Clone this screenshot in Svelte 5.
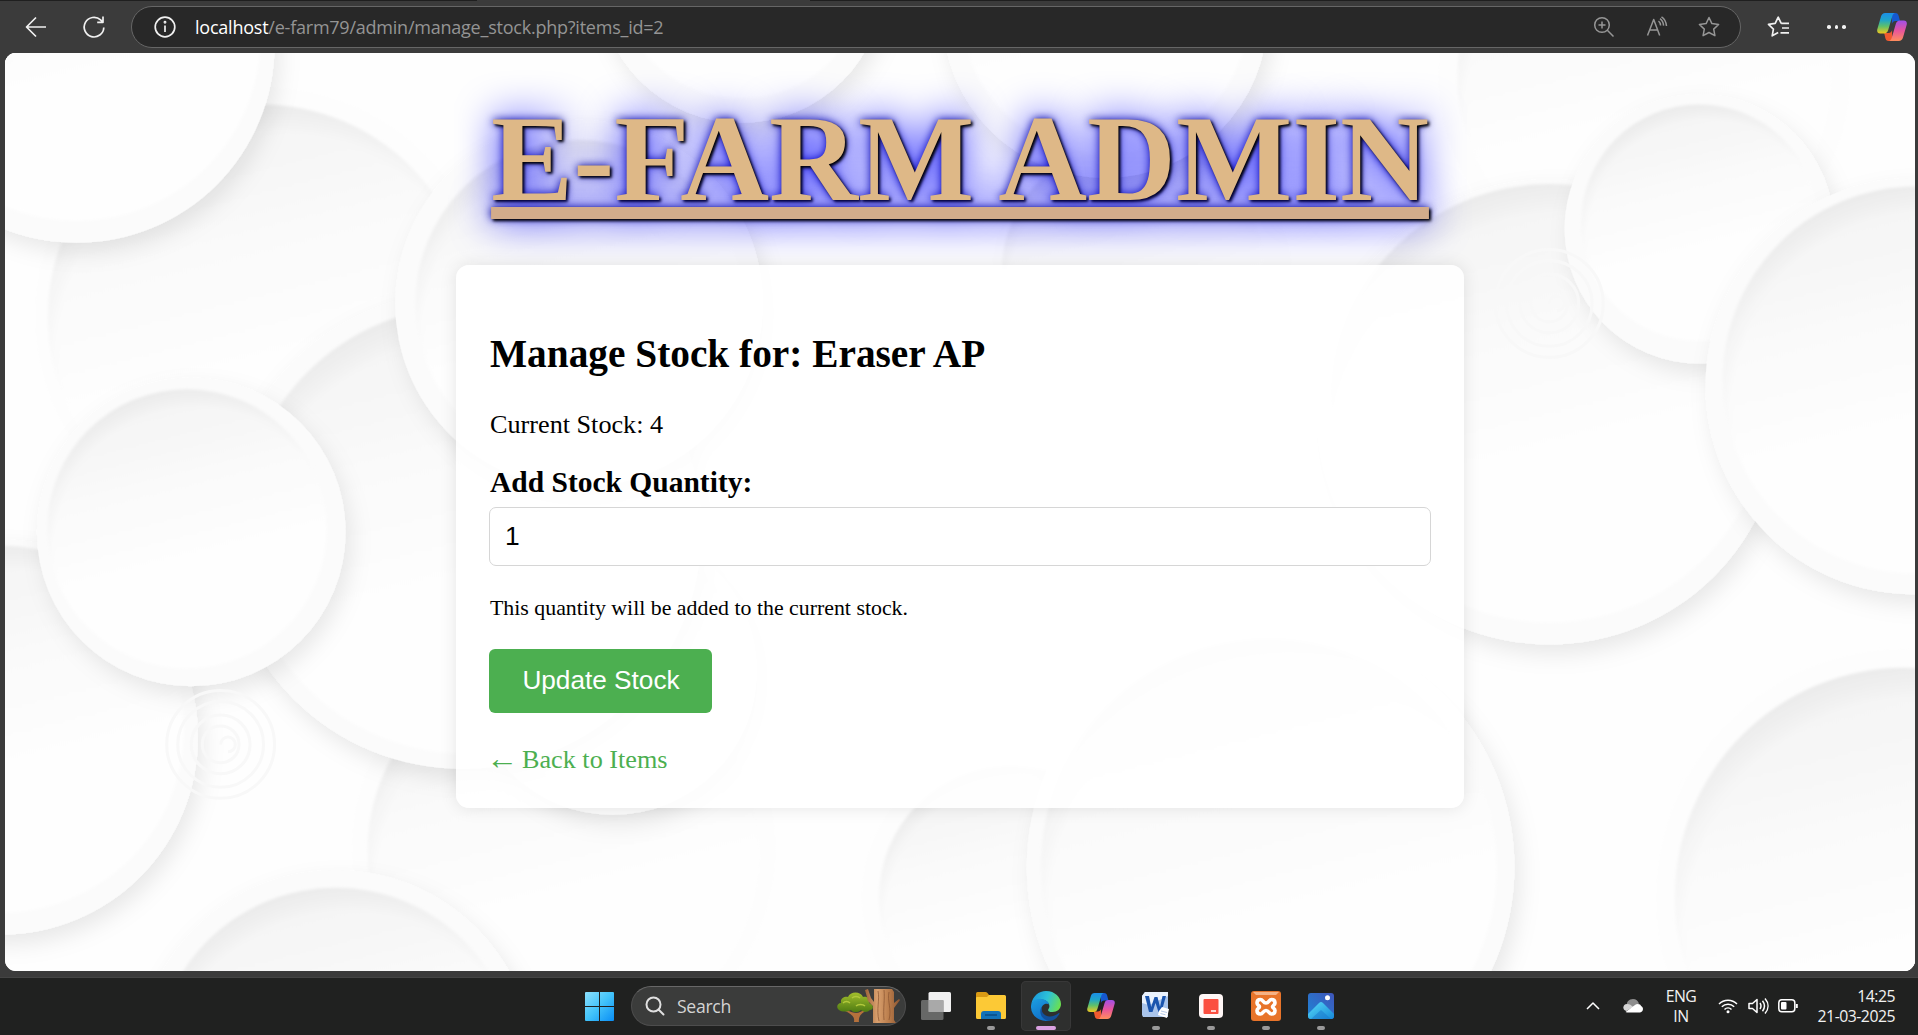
<script>
  // Relief discs of the page backdrop: rim centre and radius, then the inner face.
  // A flat disc has no raised rim, only the recessed face.
  const discs = [
    { x: 2684, y: 60, r: 335, ix: 2684, iy: 60, ir: 305, flat: true },
    { x: 1864, y: 390, r: 245, ix: 1850, iy: 380, ir: 215, flat: true },
    { x: 430, y: 450, r: 372, ix: 425, iy: 452, ir: 347, flat: true },
    { x: 1210, y: -98, r: 233, ix: 1210, iy: -110, ir: 205 },
    { x: 1804, y: -40, r: 265, ix: 1804, iy: -50, ir: 235 },
    { x: 125, y: 8, r: 323, ix: 125, iy: -5, ir: 300 },
    { x: 920, y: 1320, r: 345, ix: 920, iy: 1325, ir: 320, flat: true },
    { x: 1000, y: 1030, r: 235, ix: 1000, iy: 1020, ir: 210 },
    { x: 755, y: 800, r: 390, ix: 760, iy: 800, ir: 365 },
    { x: 945, y: 430, r: 300, ix: 945, iy: 430, ir: 267 },
    { x: 0, y: 1138, r: 323, ix: 0, iy: 1125, ir: 300 },
    { x: 312, y: 803, r: 252, ix: 305, iy: 798, ir: 228 },
    { x: 548, y: 1680, r: 325, ix: 548, iy: 1680, ir: 296 },
    { x: 1650, y: 1400, r: 243, ix: 1650, iy: 1400, ir: 215, flat: true },
    { x: 2074, y: 1350, r: 398, ix: 2071, iy: 1350, ir: 372 },
    { x: 2529, y: 607, r: 380, ix: 2529, iy: 593, ir: 358 },
    { x: 2774, y: 308, r: 220, ix: 2774, iy: 298, ir: 193 },
    { x: 3124, y: 565, r: 340, ix: 3128, iy: 555, ir: 316 },
    { x: 3109, y: 1400, r: 405, ix: 3109, iy: 1400, ir: 375, flat: true }
  ];
  const spirals = [{ x: 2529, y: 430 }, { x: 360, y: 1150 }];
  let quantity = $state('1');
</script>

{#snippet copilot()}
  <svg viewBox="0 0 30 28">
    <defs>
      <linearGradient id="cpA" x1="0" y1="0" x2="0" y2="1">
        <stop offset="0" stop-color="#1b8fe8" /><stop offset=".35" stop-color="#1fa5c9" />
        <stop offset=".65" stop-color="#5fc06a" /><stop offset="1" stop-color="#f2c81e" />
      </linearGradient>
      <linearGradient id="cpB" x1="0" y1="0" x2="0" y2="1">
        <stop offset="0" stop-color="#a14fe8" /><stop offset=".5" stop-color="#e8559c" />
        <stop offset="1" stop-color="#ff8d5c" />
      </linearGradient>
    </defs>
    <path d="M15 0h3.500c1.800 0 2.700 1.100 3.200 2.900L23 8h-4.500c-2 0-3 1-3.600 3z" fill="#1558cf" />
    <path d="M15 28h-3.500c-1.800 0-2.700-1.100-3.200-2.900L7.200 20h4.300c2 0 3-1 3.600-3z" fill="#f0592f" />
    <path d="M8.200 0H18c-1.600.5-2.300 1.700-2.800 3.400l-4 13.600c-.7 2.300-1.900 3.500-4 3.500H3.200C.8 20.500-.3 18.800.3 16.300L4 3.500C4.700 1.200 6 0 8.200 0z" fill="url(#cpA)" />
    <path d="M21.800 28H12c1.600-.5 2.300-1.700 2.800-3.400l4-13.600c.7-2.300 1.900-3.500 4-3.500h4c2.400 0 3.500 1.700 2.900 4.200L26 24.500c-.7 2.300-2 3.500-4.200 3.500z" fill="url(#cpB)" />
  </svg>
{/snippet}

<div class="screen">
  <div class="tabs-edge"><span></span></div>
  <header class="toolbar">
    <button class="nav back" aria-label="Back">
      <svg width="22" height="22" viewBox="0 0 22 22"><path d="M21 11H1.500M11 1.500L1.500 11 11 20.500" /></svg>
    </button>
    <button class="nav reload" aria-label="Refresh">
      <svg width="24" height="24" viewBox="0 0 24 24"><path d="M21.800 12.500a9.800 9.800 0 1 1-3.200-7.600l2.200 2.200M21 1.500v5.800h-5.800" /></svg>
    </button>
    <div class="address">
      <svg class="info" width="22" height="22" viewBox="0 0 22 22"><circle cx="11" cy="11" r="9.800" /><path d="M11 9.500v6.500" /><circle cx="11" cy="6.300" r=".6" /></svg>
      <span class="url"><b>localhost</b>/e-farm79/admin/manage_stock.php?items_id=2</span>
      <div class="tools">
        <svg viewBox="0 0 22 22"><circle cx="9" cy="9" r="7.300" /><path d="M14.300 14.300L20.500 20.500M9 5.500v7M5.500 9h7" /></svg>
        <svg viewBox="0 0 22 22"><path d="M1.500 19.500L7.700 3.500l6 16M3.600 14h8.100M12.500 5c1.300 1 2 2.500 2.100 4.500M14 2.600c2.200 1.600 3.400 3.900 3.600 7M15.500.8c3 2 4.700 5 5 9.200" /></svg>
        <svg viewBox="0 0 22 22"><path d="M11 1.500l2.900 6.100 6.700.9-4.900 4.600 1.200 6.600-5.900-3.200-5.900 3.200 1.200-6.600-4.900-4.600 6.700-.9z" /></svg>
      </div>
    </div>
    <svg class="favs" width="23" height="22" viewBox="0 0 23 22"><path d="M14.200 7.400l-3-6.200-3 6.200-6.700 1 4.900 4.700-1.200 6.700 6-3.200M14.200 7.400H22M15 12h7M13.500 16.800H22" /></svg>
    <div class="dots"><i></i><i></i><i></i></div>
    <div class="copilot">{@render copilot()}</div>
  </header>

  <main class="page">
    <svg class="backdrop" viewBox="8 21 3118 1499" preserveAspectRatio="none" aria-hidden="true">
      <defs>
        <linearGradient id="face" x1=".35" y1="0" x2=".6" y2="1">
          <stop offset="0" stop-color="#f3f3f3" /><stop offset=".35" stop-color="#fafafa" />
          <stop offset=".62" stop-color="#fefefe" /><stop offset="1" stop-color="#fefefe" />
        </linearGradient>
        <radialGradient id="lip" cx=".53" cy=".57" r=".57">
          <stop offset=".88" stop-color="#000" stop-opacity="0" /><stop offset="1" stop-color="#000" stop-opacity=".035" />
        </radialGradient>
        <filter id="cast" x="-20%" y="-20%" width="140%" height="140%">
          <feDropShadow dx="9" dy="16" stdDeviation="17" flood-color="#000" flood-opacity=".085" />
        </filter>
        <filter id="soft"><feGaussianBlur stdDeviation="3" /></filter>
      </defs>
      <rect x="8" y="21" width="3118" height="1499" fill="#fefefe" />
      {#each discs as d}
        {#if !d.flat}
          <circle cx={d.x} cy={d.y} r={d.r} fill="#fbfbfb" filter="url(#cast)" />
        {:else}
          <circle cx={d.x} cy={d.y} r={d.r} fill="#fdfdfd" filter="url(#soft)" />
        {/if}
        <g filter="url(#soft)">
          <circle cx={d.ix} cy={d.iy} r={d.ir} fill="url(#face)" />
          <circle cx={d.ix} cy={d.iy} r={d.ir} fill="url(#lip)" />
        </g>
      {/each}
      {#each spirals as s}
        <g fill="none" stroke="#f8f8f8" stroke-width="5">
          <circle cx={s.x} cy={s.y} r="88" /><circle cx={s.x} cy={s.y} r="70" />
          <circle cx={s.x} cy={s.y} r="48" /><circle cx={s.x} cy={s.y} r="30" />
          <path d="M{s.x} {s.y}a12 12 0 1 1 12 12" />
        </g>
      {/each}
    </svg>
    <h1>E-FARM ADMIN</h1>
    <section class="card">
      <h2>Manage Stock for: Eraser AP</h2>
      <p class="current">Current Stock: 4</p>
      <label for="qty">Add Stock Quantity:</label>
      <input id="qty" type="text" bind:value={quantity} />
      <small>This quantity will be added to the current stock.</small>
      <button class="update">Update Stock</button>
      <a href="#items"><span class="arrow">←</span><span>Back to Items</span></a>
    </section>
  </main>

  <footer class="taskbar">
    <svg class="start" width="29" height="29" viewBox="0 0 29 29">
      <defs><linearGradient id="win" x1="0" y1="0" x2="1" y2="1"><stop offset="0" stop-color="#8be0fd" /><stop offset=".5" stop-color="#42c3fa" /><stop offset="1" stop-color="#0a8ef5" /></linearGradient></defs>
      <path fill="url(#win)" d="M1 0h13v14H0V1q0-1 1-1zM15 0h13q1 0 1 1v13H15zM0 15h14v14H1q-1 0-1-1zM15 15h14v13q0 1-1 1H15z" />
    </svg>
    <div class="search">
      <svg class="lens" width="20" height="20" viewBox="0 0 20 20"><circle cx="8.500" cy="8.500" r="7" /><path d="M13.500 13.500l5 5" /></svg>
      <span>Search</span>
      <svg class="tree" width="64" height="34" viewBox="0 0 64 34">
        <defs>
          <linearGradient id="bark"><stop offset="0" stop-color="#9c6238" /><stop offset=".35" stop-color="#d9a06e" /><stop offset=".7" stop-color="#b87b4a" /><stop offset="1" stop-color="#8a5430" /></linearGradient>
          <linearGradient id="leaf" x1="0" y1="0" x2="0" y2="1"><stop offset="0" stop-color="#a3bf2c" /><stop offset="1" stop-color="#4d7a12" /></linearGradient>
        </defs>
        <path d="M17 33c1-6-3-8-9-11l1-1c5 2 8 3 10 3 3 0 6-2 10-4l1 1c-5 3-9 6-8 12z" fill="#b5713c" />
        <path d="M2 21c-3-2-2-7 2-7-1-5 4-7 7-6 2-6 13-6 15 0 6-1 8 4 6 6 5 1 5 7 1 7-3 3-7 2-9 0-3 3-8 3-10 0-4 2-9 2-12 0z" fill="url(#leaf)" />
        <path d="M6 14c2-2 5-2 7 0M15 9c2-2 6-2 8 0M19 17c2-2 7-2 9 0" stroke="#b3c93c" stroke-width="1.500" fill="none" />
        <path d="M28 1l3-1 3 9 3 4v-13h18l2 3v11l5-4 1 1-6 8v12l2 3H36V17l-5-5z" fill="url(#bark)" />
        <path d="M41 2c2 9-2 18 1 30M47 1c1 9-1 18 0 30M52 3c-2 9 3 17 0 28" stroke="#87522f" stroke-width=".7" fill="none" />
      </svg>
    </div>
    <div class="apps">
      <div class="app">
        <svg width="30" height="28" viewBox="0 0 30 28"><rect x="7.500" y="0" width="22.500" height="20" rx="1.500" fill="#f1f1f1" /><rect x="0" y="8" width="22.500" height="20" rx="1.500" fill="#777" fill-opacity=".82" /><path d="M7.500 8h15v12h-15z" fill="#a9a9a9" /></svg>
      </div>
      <div class="app open">
        <svg width="30" height="27" viewBox="0 0 30 27"><path d="M0 1.500Q0 0 1.500 0h8q1 0 2 1L13 3v5H0z" fill="#d99a14" /><path d="M0 6q0-1 1-1h10l2-2h15.500Q30 3 30 4.500V25.500Q30 27 28.500 27h-27Q0 27 0 25.500z" fill="#fcc936" /><path d="M5 27v-5q0-3 3-3h14q3 0 3 3v5z" fill="#1272b8" /><path d="M9 23h12" stroke="#0a4c84" stroke-width="1.500" /></svg>
      </div>
      <div class="app active">
        <svg width="30" height="30" viewBox="0 0 30 30">
          <defs>
            <linearGradient id="edA" x1="0" y1=".3" x2="1" y2=".6"><stop offset="0" stop-color="#1a98db" /><stop offset=".5" stop-color="#2dc2d8" /><stop offset="1" stop-color="#6be04f" /></linearGradient>
            <linearGradient id="edB" x1="0" y1="0" x2=".5" y2="1"><stop offset="0" stop-color="#1c9fe0" /><stop offset="1" stop-color="#1070c9" /></linearGradient>
          </defs>
          <path d="M.4 12.500C1.800 5.400 7.600 0 15 0c9 0 15 6.500 15 13 0 5-4 8-8.500 8-3.500 0-5-1.300-4.300-2.600.9-1.200 1.200-2 1.200-3.400 0-3.500-3.600-6.500-8.100-6.500-4.300 0-7.900 1.500-9.900 4z" fill="url(#edA)" />
          <path d="M.4 12.500C2 9 6 7.500 10 7.900c4 .3 7.300 2.600 8.200 5.600-2.600-1.900-7.500-.2-7.700 4.500C10.300 23.500 14 28.500 20 29.100 9.500 32.500-.5 25 0 15z" fill="url(#edB)" />
          <path d="M11 15.500c-1.500 5 2 9.800 7.500 10 3.500.1 6.500-1.200 9-3.200.8-.6 1.300.1.900.8C26 27.200 22.500 30 18 29.700 10.500 29.300 7 20.500 11 15.500z" fill="#124f99" />
        </svg>
      </div>
      <div class="app cp">{@render copilot()}</div>
      <div class="app open up">
        <svg width="28" height="28" viewBox="0 0 28 28"><path d="M4 1h23v25H2L1 24V5z" fill="#a9c4ea" /><path d="M4 1h23v4L8 14 1 12V5z" fill="#eaf2fc" /><path d="M4 5h4l2.200 11L13.500 6h3l2.500 10L21.500 5h3.500l-4.500 16h-3L14.500 12l-3 9H8z" fill="#1a55ae" /><path d="M18 20l3-4 7 2-2 9-9-3z" fill="#fff" /><path d="M20 20l6 1.500M19.500 22.500l5 1.300" stroke="#b4c8e6" stroke-width="1" /></svg>
      </div>
      <div class="app open">
        <svg width="24" height="24" viewBox="0 0 24 24"><rect width="24" height="24" rx="4" fill="#fff7f6" /><rect x="4.500" y="5" width="15" height="15" rx="1" fill="#fb4f40" /><path d="M12 17h5" stroke="#fff" stroke-width="1.500" /></svg>
      </div>
      <div class="app open">
        <svg width="30" height="30" viewBox="0 0 30 30"><rect width="30" height="30" rx="3" fill="#e8742a" /><path d="M2 1h26l-3 3H5z" fill="#f5b285" /><g fill="none" stroke="#fff" stroke-width="3.600" stroke-linejoin="round"><path d="M9.500 8.500c2.500 0 2.500 3.500 5.500 3.500s3-3.500 5.500-3.500 3.500 1.500 3.500 3.500-2.500 2.500-2.500 3.800 2.500 1.500 2.500 3.700-1 3.500-3.500 3.500-2.500-3.500-5.500-3.500-3 3.500-5.500 3.500-3.500-1.500-3.500-3.500 2.500-2.500 2.500-3.700S6 14.200 6 12s1-3.500 3.500-3.500z" /></g></svg>
      </div>
      <div class="app open">
        <svg width="26" height="26" viewBox="0 0 26 26"><defs><linearGradient id="ph" x1="1" y1="0" x2="0" y2="1"><stop offset="0" stop-color="#3f55ba" /><stop offset="1" stop-color="#1d86d6" /></linearGradient><linearGradient id="mt" x1="0" y1="0" x2="1" y2="1"><stop offset="0" stop-color="#59dcf8" /><stop offset="1" stop-color="#1688d8" /></linearGradient></defs><rect width="26" height="26" rx="3" fill="url(#ph)" /><path d="M0 21L11 10q2-2 4 0L26 21v2q0 3-3 3H3q-3 0-3-3z" fill="url(#mt)" /><path d="M3 26l10-9 10 9z" fill="#1a76cc" opacity=".5" /><circle cx="19.500" cy="4.700" r="2.500" fill="#fff" /></svg>
      </div>
    </div>
    <div class="tray">
      <svg class="chev" width="14" height="9" viewBox="0 0 14 9"><path d="M1 8l6-6 6 6" /></svg>
      <svg class="cloud" width="20" height="14" viewBox="0 0 20 14"><path d="M4 7C3 3 6 0 10 0c3 0 5 2 6 4.500L10 9z" fill="#8d8d8d" /><path d="M3.500 12C-1 11-.5 5 4 5c3 0 4 1 6 3z" fill="#d5d5d5" /><path d="M2.500 13L12 6c2-2 6-1 6 1 3 1 2.500 6.500-1 6.500H4z" fill="#fff" /></svg>
      <div class="lang"><span>ENG</span><span>IN</span></div>
      <svg class="wifi" width="20" height="16" viewBox="0 0 20 16"><path d="M1 6a12.500 12.500 0 0 1 18 0M3.800 8.800a8.800 8.800 0 0 1 12.400 0M6.500 11.500a5 5 0 0 1 7 0" /><circle cx="10" cy="13.800" r="1.500" fill="#fff" stroke="none" /></svg>
      <svg class="vol" width="21" height="18" viewBox="0 0 21 18"><path d="M1 6.500h3.500L9 2.500v13L4.500 11.500H1zM12 6c1.300 2 1.300 4 0 6M14.500 3.800c2.500 3.300 2.500 7.100 0 10.400M17 1.500c4 4.600 4 10.400 0 15" /></svg>
      <svg class="bat" width="20" height="14" viewBox="0 0 20 14"><rect x=".8" y=".8" width="16" height="12" rx="3" /><path d="M18.800 5v4" stroke-width="2" /><rect x="3" y="3" width="5.500" height="7.500" rx="1" fill="#fff" stroke="none" /></svg>
      <div class="clock"><span>14:25</span><span>21-03-2025</span></div>
    </div>
  </footer>
</div>

<style>
  :global(body) { margin: 0; background: #3b3b3b; }
  .screen {
    display: flex; flex-direction: column; width: 1918px; height: 1035px; overflow: hidden;
    background: #3b3b3b; font-family: "Open Sans", "Noto Sans", sans-serif;
  }
  svg { display: block; flex: none; }
  button { border: 0; padding: 0; background: none; }
  .tabs-edge { height: 1px; background: #1f1f1f; }
  .tabs-edge span { display: block; width: 333px; height: 1px; margin-left: 477px; background: #3b3b3b; }

  .toolbar { display: flex; align-items: center; flex: none; height: 52px; box-sizing: border-box; padding: 0 11px 0 25px; }
  .toolbar svg { fill: none; }
  .nav svg, .info, .favs { stroke: #f0f0f0; stroke-width: 1.7; stroke-linejoin: round; }
  .reload { margin-left: 35px; }
  .address {
    display: flex; align-items: center; box-sizing: border-box; width: 1610px; height: 42px; margin-left: 25px;
    padding: 0 20px 0 22px; border: 1px solid #666; border-radius: 21px; background: #282828;
  }
  .url { margin-left: 19px; font-size: 18px; line-height: 24px; letter-spacing: -0.23px; color: #949494; white-space: nowrap; }
  .url b { font-weight: 400; color: #fff; }
  .tools { display: flex; gap: 30.500px; margin-left: auto; }
  .tools svg { width: 22px; height: 22px; stroke: #969696; stroke-width: 1.500; stroke-linejoin: round; }
  .favs { margin-left: 26px; }
  .dots { display: flex; gap: 4px; margin-left: 37px; }
  .dots i { width: 3.500px; height: 3.500px; border-radius: 50%; background: #f2f2f2; }
  .copilot { width: 30px; height: 28px; margin-left: auto; }

  .page {
    position: relative; display: flex; flex-direction: column; align-items: center; flex: none; isolation: isolate;
    width: 1910px; height: 918px; margin-left: 5px; overflow: hidden; border-radius: 11px;
    background: #fefefe; font-family: "Liberation Serif", serif; color: #000;
  }
  .backdrop { position: absolute; inset: 0; z-index: -1; width: 100%; height: 100%; }
  h1 {
    margin: 36px 0 0; font-size: 123.100px; line-height: 140px; font-weight: 700; color: burlywood; white-space: nowrap;
    text-decoration: underline #d3ac8b; text-decoration-thickness: 12px; text-underline-offset: 7px; text-decoration-skip-ink: none;
    text-shadow: 2px 2px 3px black, 0 0 42px blue, 0 0 8px darkblue;
  }
  .card {
    display: flex; flex-direction: column; align-items: flex-start; box-sizing: border-box;
    width: 1008px; height: 543px; margin-top: 36px; padding: 33px; border-radius: 13px;
    background: rgba(255, 255, 255, .88); box-shadow: 0 0 17px rgba(0, 0, 0, .1);
  }
  h2 { margin: 34px 0 0 1px; font-size: 39.350px; line-height: 44px; }
  .current { margin: 34px 0 0 1px; font-size: 26.200px; line-height: 30px; }
  label { margin: 25px 0 0 1px; font-size: 29.500px; line-height: 34px; font-weight: 700; }
  input {
    box-sizing: border-box; width: 100%; height: 59px; margin-top: 8px; padding: 0 14px 1px 15px; border: 1px solid #d6d6d6;
    border-radius: 7px; background: #fff; font: 26.400px "Liberation Sans", sans-serif; color: #000;
  }
  small { margin: 29px 0 0 1px; font-size: 21.850px; line-height: 26px; }
  .update {
    width: 223px; height: 64px; margin-top: 28px; padding: 0 0 2px 1px; border-radius: 6px; background: #4caf50; color: #fff;
    font: 26.200px "Liberation Sans", sans-serif;
  }
  a { display: flex; margin: 32px 0 0; font-size: 26.200px; line-height: 30px; color: #4caf50; text-decoration: none; }
  .arrow { width: 33px; margin-left: -3px; margin-right: 3px; margin-top: -1px; font-size: 32px; line-height: 28px; height: 30px; }

  .taskbar {
    display: flex; align-items: center; box-sizing: border-box; flex: none; height: 58px; margin-top: 6px; padding: 0 23px 1px 585px;
    border-top: 1px solid #444; background: #202120; color: #f2f2f2;
  }
  .search {
    display: flex; align-items: center; box-sizing: border-box; width: 275px; height: 40px; margin-left: 17px;
    padding: 0 4px 0 13px; border: 1px solid #4d4d4d; border-top-color: #686868; border-radius: 20px; background: #3b3c3b;
  }
  .lens { fill: none; stroke: #e0e0e0; stroke-width: 2; stroke-linecap: round; }
  .search span { margin-left: 12px; font-size: 17.600px; letter-spacing: -0.3px; color: #d4d4d4; }
  .tree { margin-left: auto; }
  .apps { display: flex; margin-left: 2.500px; }
  .app { position: relative; display: flex; align-items: center; justify-content: center; width: 55px; height: 50px; }
  .app > :global(svg) { margin-bottom: 1px; }
  .cp > :global(svg) { width: 28px; height: 26px; }
  .up > svg { margin: 0 2px 3px 0; }
  .active::before { content: ""; position: absolute; inset: 0 2.500px; border-radius: 5px; background: #2e2f2e; box-shadow: inset 0 0 0 1px #383838; z-index: 0; }
  .active svg { position: relative; }
  .open::after, .active::after {
    content: ""; position: absolute; left: 50%; bottom: 1px; width: 8px; height: 4px; border-radius: 2px;
    background: #999; transform: translateX(-50%);
  }
  .active::after { width: 20px; background: #dba1e2; }
  .tray { display: flex; align-items: center; margin-left: auto; padding-bottom: 1px; }
  .tray svg { fill: none; stroke: #fff; stroke-width: 1.500; stroke-linejoin: round; }
  .tray .cloud { margin-left: 23px; stroke: none; }
  .lang, .clock { display: flex; flex-direction: column; font-size: 15.800px; line-height: 20px; }
  .lang { align-items: center; width: 40px; margin-left: 18px; letter-spacing: -0.5px; }
  .wifi { margin-left: 17px; }
  .vol { margin-left: 10px; }
  .bat { margin-left: 9px; }
  .clock { align-items: flex-end; width: 77px; margin-left: 20px; letter-spacing: -0.5px; white-space: nowrap; }
</style>
